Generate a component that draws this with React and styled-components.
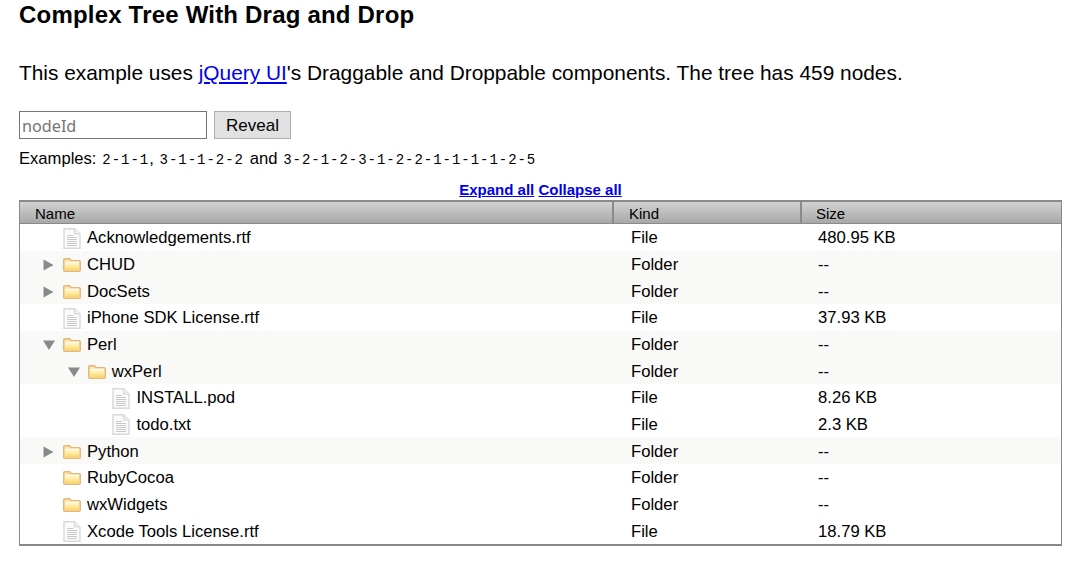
import React from "react";
import styled, { createGlobalStyle } from "styled-components";

const Global = createGlobalStyle`
  html, body { margin: 0; padding: 0; background: #fff; }
  body { font-family: "Liberation Sans", Arial, sans-serif; color: #000; }
`;
const Page = styled.div`
  padding: 0 18px 0 19px;
  display: flex;
  flex-direction: column;
`;
const Title = styled.h1`
  margin: 0;
  padding-top: 2px;
  font-size: 24px;
  line-height: 26px;
  letter-spacing: 0.2px;
  font-weight: bold;
`;
const Intro = styled.p`
  margin: 0;
  padding-top: 33px;
  font-size: 20.87px;
  line-height: 24px;
  a { color: #00e; text-decoration: underline; }
`;
const SearchRow = styled.div`
  display: flex;
  gap: 7px;
  margin-top: 26px;
  height: 28px;
`;
const NodeInput = styled.input`
  box-sizing: border-box;
  width: 188px;
  height: 28px;
  border: 1px solid #767676;
  padding: 3px 2px 1px;
  font-family: "Noto Sans", "Liberation Sans", Arial, sans-serif;
  font-size: 16.2px;
  outline: none;
  &::placeholder { color: #757575; opacity: 1; }
`;
const RevealButton = styled.button`
  box-sizing: border-box;
  width: 77px;
  height: 28px;
  border: 1px solid #adadad;
  background: #e1e1e1;
  font-family: "Liberation Sans", Arial, sans-serif;
  font-size: 17px;
  padding: 2px 0 0;
  color: #000;
`;
const Examples = styled.div`
  margin-top: 10px;
  font-size: 16.6px;
  line-height: 19px;
  word-spacing: 1.2px;
  code {
    font-family: "Liberation Mono", monospace;
    font-size: 14px;
    letter-spacing: 0.97px;
  }
`;
const ExpandLinks = styled.div`
  margin-top: 11px;
  height: 19px;
  text-align: center;
  font-size: 15px;
  line-height: 18px;
  font-weight: bold;
  a { color: #00e; text-decoration: underline; }
`;
const Tree = styled.table`
  box-sizing: border-box;
  width: 1043px;
  border-collapse: separate;
  border-spacing: 0;
  table-layout: fixed;
  border: 1px solid #888;
  border-top: 0;
  border-bottom: 2px solid #888;
`;
const HeadCell = styled.th`
  box-sizing: border-box;
  height: 24px;
  padding: 3px 0 0 ${(p) => (p.$last ? 14 : 15)}px;
  text-align: left;
  font-weight: normal;
  font-size: 15px;
  line-height: 17px;
  vertical-align: top;
  background: linear-gradient(#d2d2d2, #a8a8a8);
  border-top: 2px solid #8a8a8a;
  border-bottom: 1px solid #8a8a8a;
  border-right: ${(p) => (p.$last ? "0" : "2px solid #8a8a8a")};
`;
const Row = styled.tr`
  background: ${(p) => (p.$alt ? "#f9f9f7" : "#fff")};
`;
const Cell = styled.td`
  box-sizing: border-box;
  height: 26.67px;
  padding: 2px 0 0 ${(p) => p.$pad}px;
  font-size: 16.65px;
  line-height: 18px;
  vertical-align: middle;
`;
const NameWrap = styled.div`
  display: flex;
  align-items: center;
  padding-left: ${(p) => 23 + p.$depth * 24.7}px;
`;
const Twisty = styled.span`
  flex: none;
  width: 20px;
  display: flex;
`;
const Label = styled.span`
  margin-left: 6px;
  white-space: nowrap;
`;

const Arrow = ({ open }) => (
  <svg width="12" height="12" viewBox="0 0 12 12">
    <path d={open ? "M0 1.5H12L6 11Z" : "M0.5 0.5L10.5 6L0.5 11.5Z"} fill="#8a8a8a" />
  </svg>
);
const FileIcon = () => (
  <svg width="18" height="21" viewBox="0 0 18 21" style={{ flex: "none" }}>
    <path d="M1 .8H11.5L17 6V20.2H1Z" fill="#fbfbfb" stroke="#d8d8d8" strokeWidth="1.4" />
    <path d="M11.5 .8V6H17" fill="#f0f0f0" stroke="#d8d8d8" strokeWidth="1.2" />
    <path d="M4 7.5H10M4 9.5H14M4 11.5H14M4 13.5H14M4 15.5H14M4 17.5H14" stroke="#c8c8c8" strokeWidth="1" />
  </svg>
);
const FolderIcon = () => (
  <svg width="18" height="14" viewBox="0 0 18 14" style={{ flex: "none" }}>
    <defs>
      <linearGradient id="foldFill" x1="0" y1="0" x2="0" y2="1">
        <stop offset="0" stopColor="#fff9d0" />
        <stop offset="1" stopColor="#fbd565" />
      </linearGradient>
    </defs>
    <path d="M.7 1.8Q.7 .7 1.8 .7H6.5L8.3 2.6H16.2Q17.3 2.6 17.3 3.7V12.2Q17.3 13.3 16.2 13.3H1.8Q.7 13.3 .7 12.2Z" fill="#fbe59c" stroke="#e8b681" strokeWidth="1.4" />
    <path d="M2 5.2H16V12.2H2Z" fill="url(#foldFill)" />
    <path d="M2 4.4H16" stroke="#fffdf0" strokeWidth="1.3" />
  </svg>
);

const rows = [
  { name: "Acknowledgements.rtf", kind: "File", size: "480.95 KB", depth: 0 },
  { name: "CHUD", kind: "Folder", size: "--", depth: 0, state: "closed", alt: true },
  { name: "DocSets", kind: "Folder", size: "--", depth: 0, state: "closed", alt: true },
  { name: "iPhone SDK License.rtf", kind: "File", size: "37.93 KB", depth: 0 },
  { name: "Perl", kind: "Folder", size: "--", depth: 0, state: "open", alt: true },
  { name: "wxPerl", kind: "Folder", size: "--", depth: 1, state: "open", alt: true },
  { name: "INSTALL.pod", kind: "File", size: "8.26 KB", depth: 2 },
  { name: "todo.txt", kind: "File", size: "2.3 KB", depth: 2 },
  { name: "Python", kind: "Folder", size: "--", depth: 0, state: "closed", alt: true },
  { name: "RubyCocoa", kind: "Folder", size: "--", depth: 0 },
  { name: "wxWidgets", kind: "Folder", size: "--", depth: 0 },
  { name: "Xcode Tools License.rtf", kind: "File", size: "18.79 KB", depth: 0 },
];

export default function App() {
  return (
    <Page>
      <Global />
      <Title>Complex Tree With Drag and Drop</Title>
      <Intro>
        This example uses <a href="#x">jQuery UI</a>'s Draggable and Droppable components. The tree has 459 nodes.
      </Intro>
      <SearchRow>
        <NodeInput placeholder="nodeId" />
        <RevealButton>Reveal</RevealButton>
      </SearchRow>
      <Examples>
        Examples: <code>2-1-1</code>, <code>3-1-1-2-2</code> and <code>3-2-1-2-3-1-2-2-1-1-1-1-2-5</code>
      </Examples>
      <ExpandLinks>
        <a href="#e">Expand all</a> <a href="#c">Collapse all</a>
      </ExpandLinks>
      <Tree>
        <colgroup>
          <col style={{ width: 594 }} />
          <col style={{ width: 188 }} />
          <col />
        </colgroup>
        <thead>
          <tr>
            <HeadCell>Name</HeadCell>
            <HeadCell>Kind</HeadCell>
            <HeadCell $last>Size</HeadCell>
          </tr>
        </thead>
        <tbody>
          {rows.map((r) => (
            <Row key={r.name} $alt={r.alt}>
              <Cell $pad={0}>
                <NameWrap $depth={r.depth}>
                  <Twisty>{r.state && <Arrow open={r.state === "open"} />}</Twisty>
                  {r.kind === "File" ? <FileIcon /> : <FolderIcon />}
                  <Label>{r.name}</Label>
                </NameWrap>
              </Cell>
              <Cell $pad={17}>{r.kind}</Cell>
              <Cell $pad={16}>{r.size}</Cell>
            </Row>
          ))}
        </tbody>
      </Tree>
    </Page>
  );
}
